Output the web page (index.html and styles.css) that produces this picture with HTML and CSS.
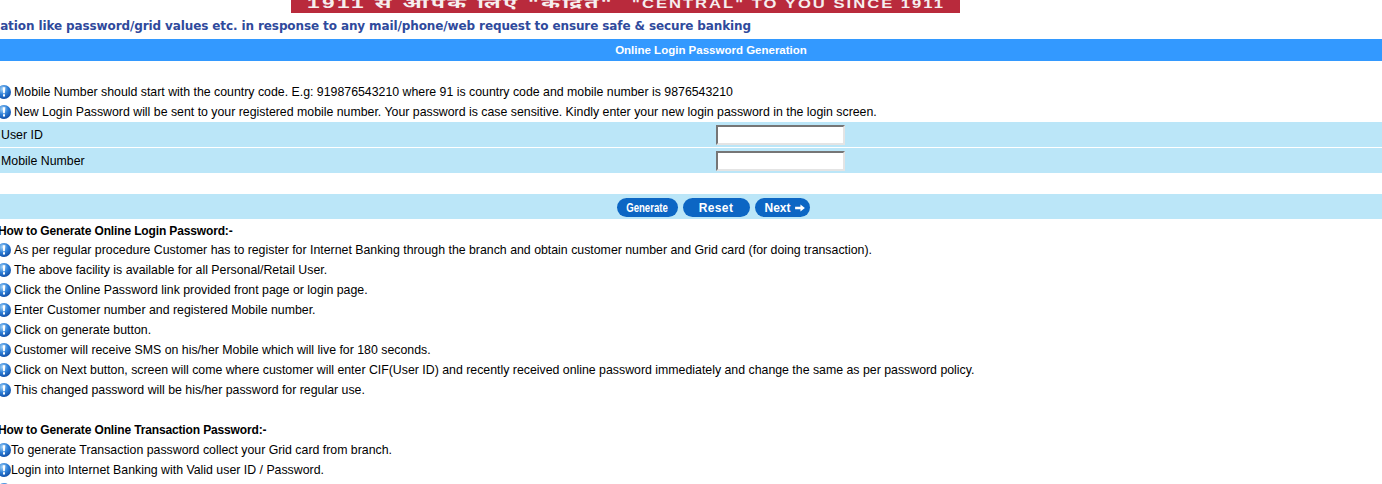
FILE: index.html
```html
<!DOCTYPE html>
<html lang="en">
<head>
    <meta charset="UTF-8">
    <title>Online Login Password Generation</title>
    <link rel="stylesheet" href="styles.css">
</head>
<body>
    <svg class="defs" width="0" height="0">
        <defs>
            <radialGradient id="infoFill" cx="40%" cy="30%" r="75%">
                <stop offset="0" stop-color="#a9d6f7"/>
                <stop offset="0.5" stop-color="#2f80d8"/>
                <stop offset="1" stop-color="#0c4aa4"/>
            </radialGradient>
            <symbol id="info" viewBox="0 0 14 14">
                <circle cx="7" cy="7" r="7" fill="url(#infoFill)"/>
                <path d="M5.700 2.300h2.600l-.5 6H6.200zM6 9.300h2v2.200H6z" fill="#fff"/>
            </symbol>
        </defs>
    </svg>

    <div class="banner">
        <div class="banner-img">
            <span class="banner-hi">1911 से आपके लिए "केंद्रित"</span>
            <span class="banner-en">"CENTRAL" TO YOU SINCE 1911</span>
        </div>
    </div>
    <div class="notice">
        <span>information like password/grid values etc. in response to any mail/phone/web request to ensure safe &amp; secure banking</span>
    </div>

    <div class="title-bar">Online Login Password Generation</div>

    <ul class="notes">
        <li><svg class="info"><use href="#info"/></svg>Mobile Number should start with the country code. E.g: 919876543210 where 91 is country code and mobile number is 9876543210</li>
        <li><svg class="info"><use href="#info"/></svg>New Login Password will be sent to your registered mobile number. Your password is case sensitive. Kindly enter your new login password in the login screen.</li>
    </ul>

    <form>
        <div class="field">
            <label for="userid">User ID</label>
            <input type="text" id="userid">
        </div>
        <div class="field">
            <label for="mobile">Mobile Number</label>
            <input type="text" id="mobile">
        </div>

        <div class="actions">
            <button type="button" class="btn btn-generate"><span>Generate</span></button>
            <button type="reset" class="btn btn-reset">Reset</button>
            <button type="button" class="btn btn-next">Next
                <svg width="10" height="8" viewBox="0 0 11 9"><path d="M0 3h6V.5L11 4.500 6 8.500V6H0z" fill="#fff"/></svg>
            </button>
        </div>
    </form>

    <h4>How to Generate Online Login Password:-</h4>
    <ul class="notes">
        <li><svg class="info"><use href="#info"/></svg>As per regular procedure Customer has to register for Internet Banking through the branch and obtain customer number and Grid card (for doing transaction).</li>
        <li><svg class="info"><use href="#info"/></svg>The above facility is available for all Personal/Retail User.</li>
        <li><svg class="info"><use href="#info"/></svg>Click the Online Password link provided front page or login page.</li>
        <li><svg class="info"><use href="#info"/></svg>Enter Customer number and registered Mobile number.</li>
        <li><svg class="info"><use href="#info"/></svg>Click on generate button.</li>
        <li><svg class="info"><use href="#info"/></svg>Customer will receive SMS on his/her Mobile which will live for 180 seconds.</li>
        <li><svg class="info"><use href="#info"/></svg>Click on Next button, screen will come where customer will enter CIF(User ID) and recently received online password immediately and change the same as per password policy.</li>
        <li><svg class="info"><use href="#info"/></svg>This changed password will be his/her password for regular use.</li>
    </ul>

    <h4 class="second">How to Generate Online Transaction Password:-</h4>
    <ul class="notes tight">
        <li><svg class="info"><use href="#info"/></svg>To generate Transaction password collect your Grid card from branch.</li>
        <li><svg class="info"><use href="#info"/></svg>Login into Internet Banking with Valid user ID / Password.</li>
        <li><svg class="info"><use href="#info"/></svg></li>
    </ul>
</body>
</html>
```

FILE: styles.css
```css
html, body {
    margin: 0;
    height: 484px;
    overflow: hidden;
}
body {
    font-family: "Liberation Sans", Arial, sans-serif;
    font-size: 12.33px;
    color: #000;
    background-color: #fff;
}
.defs {
    display: block;
    height: 0;
}
.banner {
    height: 13px;
    padding-left: 291px;
}
.banner-img {
    display: flex;
    align-items: baseline;
    box-sizing: border-box;
    width: 669px;
    height: 13px;
    padding-left: 16px;
    overflow: hidden;
    background-color: #b92a3c;
    color: #f6eeee;
    font-family: "Liberation Sans", "Noto Sans", sans-serif;
    font-weight: bold;
    line-height: 6px;
    letter-spacing: 1.5px;
    white-space: nowrap;
}
.banner-hi {
    flex: none;
    width: 325px;
    font-size: 14px;
    transform: scaleX(1.62);
    transform-origin: left;
}
.banner-en {
    flex: none;
    font-size: 12.5px;
    transform: scaleX(1.33);
    transform-origin: left;
}
.notice {
    width: 751px;
    height: 26px;
    display: flex;
    justify-content: flex-end;
    align-items: center;
    overflow: hidden;
    color: #2f4a9c;
    font-family: "DejaVu Sans", Verdana, sans-serif;
    font-size: 12px;
    font-weight: bold;
    letter-spacing: -0.11px;
    white-space: nowrap;
}
.title-bar {
    height: 22px;
    line-height: 22px;
    padding-left: 40px;
    background-color: #3399ff;
    color: #fff;
    font-size: 11.5px;
    font-weight: bold;
    text-align: center;
    margin-bottom: 21px;
}
.notes {
    list-style: none;
    margin: 0;
    padding: 0;
}
.notes li {
    display: flex;
    align-items: center;
    height: 20px;
    white-space: nowrap;
}
.info {
    width: 14px;
    height: 14px;
    margin: 0 3px 0 -3px;
    flex: none;
}
.tight .info {
    margin-right: 0;
}
.field {
    display: flex;
    align-items: flex-start;
    height: 25px;
    line-height: 27px;
    margin-bottom: 1px;
    background-color: #bbe6f8;
}
.field label {
    width: 716px;
    padding-left: 1px;
    box-sizing: border-box;
}
.field input {
    width: 129px;
    height: 20px;
    margin: 3px 0 0;
    box-sizing: border-box;
    padding: 1px 2px;
    border: 2px solid;
    border-color: #767676 #e4e4e4 #e4e4e4 #767676;
    background-color: #fff;
}
.actions {
    display: flex;
    justify-content: center;
    align-items: flex-start;
    gap: 5px;
    box-sizing: border-box;
    height: 25px;
    margin-top: 21px;
    padding: 4px 0 0 44px;
    background-color: #bbe6f8;
}
.btn {
    height: 19px;
    padding: 0;
    border: none;
    border-radius: 10px;
    background-color: #0c66c4;
    color: #fff;
    font-family: inherit;
    font-size: 12px;
    font-weight: bold;
    display: flex;
    justify-content: center;
    align-items: center;
}
.btn-generate {
    width: 61px;
}
.btn-generate span {
    display: inline-block;
    transform: scaleX(0.8);
}
.btn-reset {
    width: 67px;
    letter-spacing: 0.4px;
}
.btn-next {
    width: 55px;
    gap: 4px;
    padding-left: 5px;
}
h4 {
    margin: 3px 0 0 -2px;
    height: 18px;
    line-height: 18px;
    font-size: 12px;
    letter-spacing: -0.14px;
    font-weight: bold;
}
h4.second {
    margin-top: 20px;
    height: 20px;
    line-height: 20px;
}
```
